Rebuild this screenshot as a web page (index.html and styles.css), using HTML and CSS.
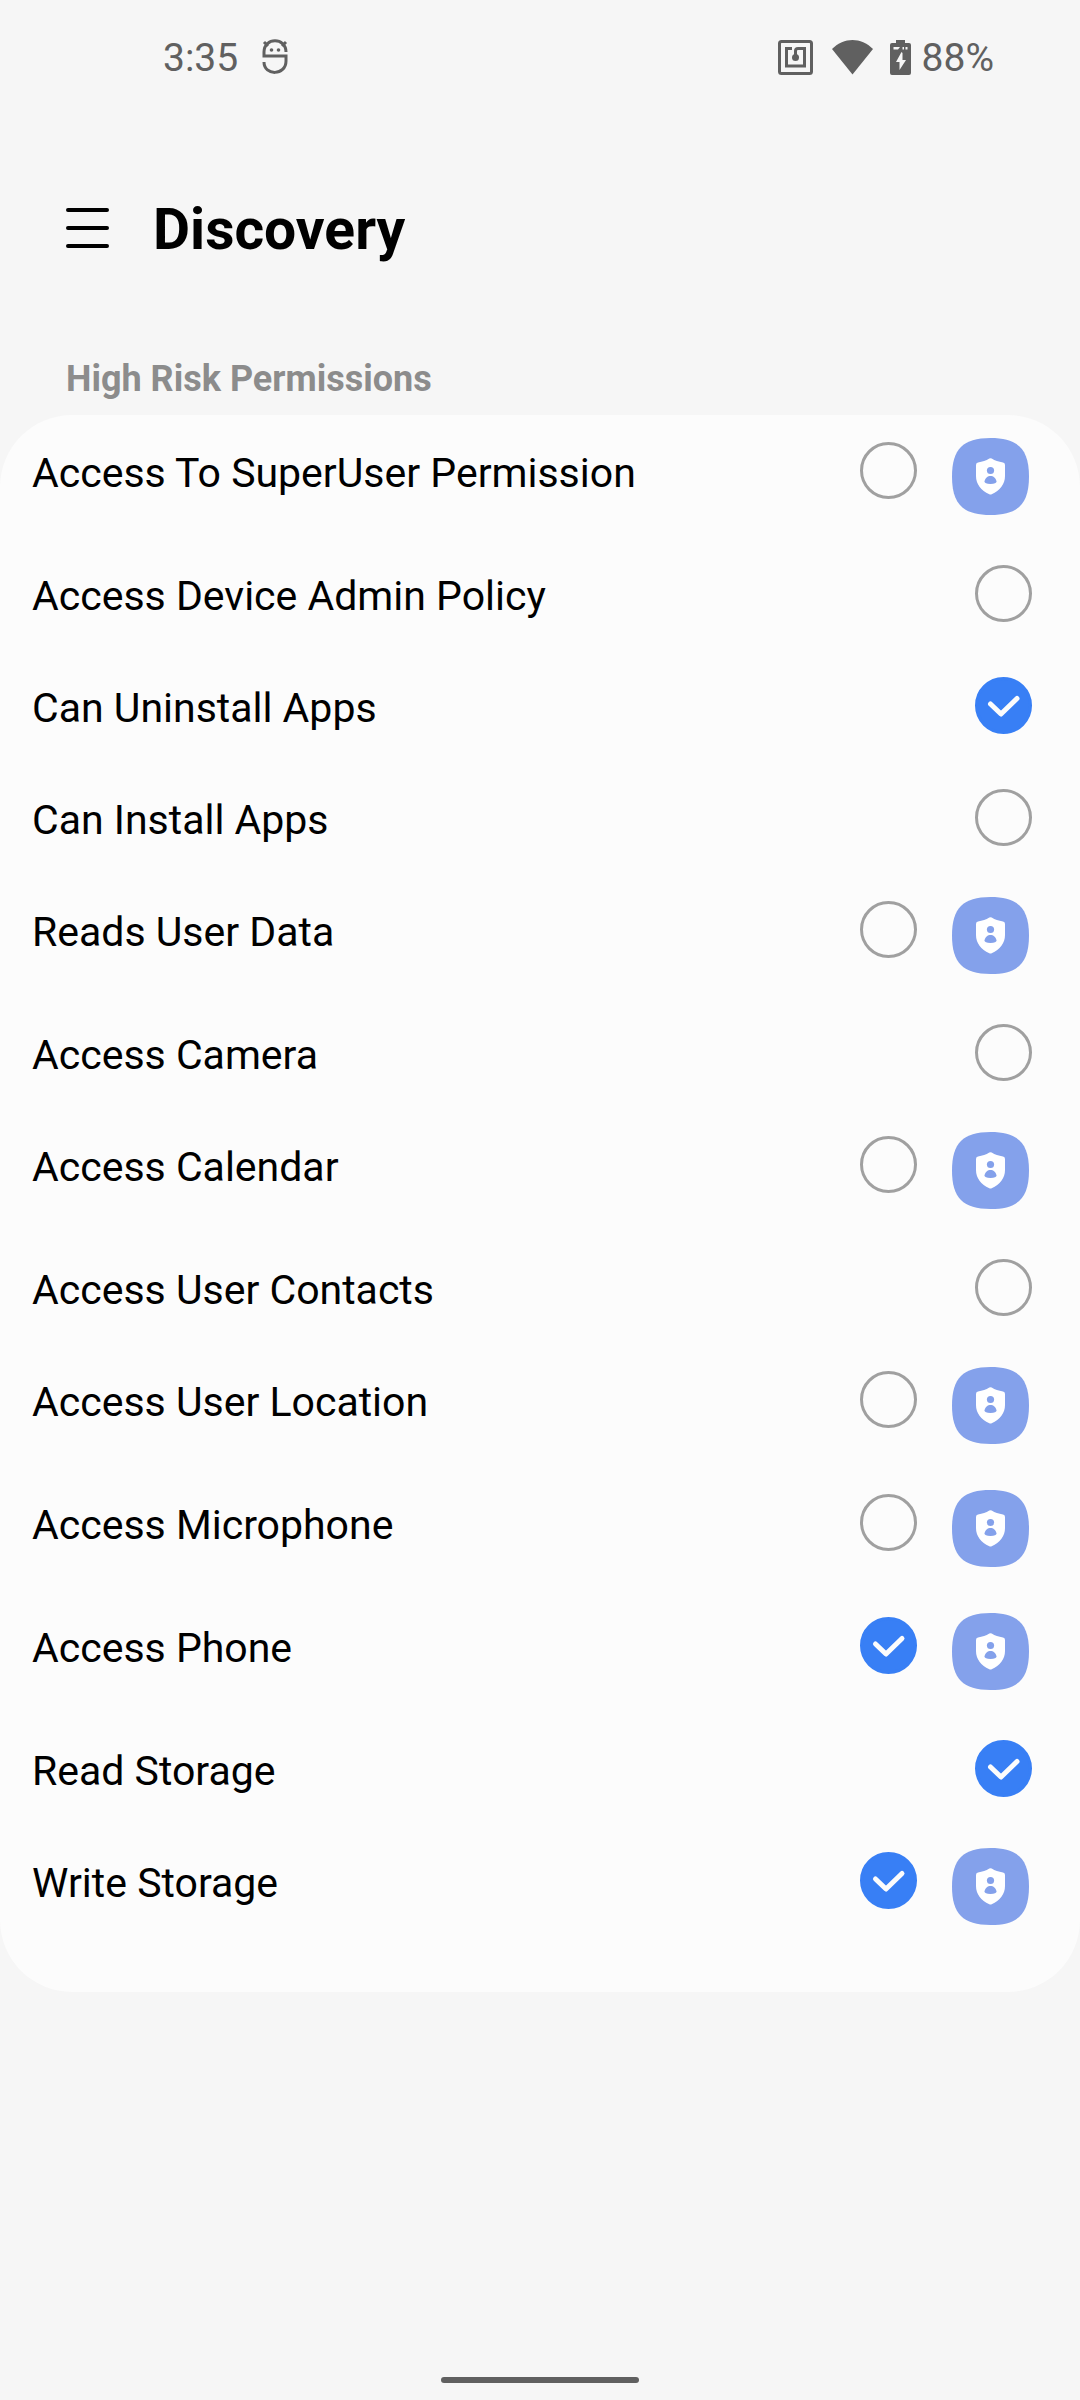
FILE: index.html
```html
<!DOCTYPE html>
<html lang="en">

<head>
    <meta charset="UTF-8">
    <meta name="viewport" content="width=device-width, initial-scale=1.0">
    <title>Discovery</title>
    <link rel="stylesheet" href="styles.css">
</head>

<body>
    <!-- Shared icons -->
    <svg class="sprite" width="0" height="0" aria-hidden="true">
        <symbol id="tick" viewBox="0 0 57 57">
            <path d="M15.500 27 L26 37 L42 21.500" fill="none" stroke="#fcfcfc" stroke-width="5" stroke-linecap="round" stroke-linejoin="round" />
        </symbol>
        <symbol id="shield" viewBox="0 0 77 77">
            <path d="M38.500 0 C66 0 77 11 77 38.500 C77 66 66 77 38.500 77 C11 77 0 66 0 38.500 C0 11 11 0 38.500 0 Z" fill="#84a1eb" />
            <path d="M37.300 20.600 Q38.500 19.800 39.700 20.600 C43 22.700 46.500 23.900 51 24.400 Q53 24.800 53 27 V38 C53 46 48 52.500 39.700 56.300 Q38.500 56.900 37.300 56.300 C29 52.500 24 46 24 38 V27 Q24 24.800 26 24.400 C30.500 23.900 34 22.700 37.300 20.600 Z" fill="#fff" />
            <circle cx="38.500" cy="32.500" r="3.600" fill="#84a1eb" />
            <path d="M32.500 43.500 C33.500 36 43.500 36 44.500 43.500 Q44.500 45.500 38.500 46 Q32.500 45.500 32.500 43.500 Z" fill="#84a1eb" />
        </symbol>
    </svg>

    <div class="status-bar">
        <span class="clock">3:35</span>
        <svg class="bug-icon" viewBox="0 0 26 36" width="26" height="36" fill="none" stroke="#606060" stroke-width="3">
            <path d="M24 13 C24 -2 2 -2 2 13 V17 H24 V22 C24 37 2 37 2 23" />
            <path d="M2 3 L6 7 M24 3 L20 7" />
            <circle cx="9.500" cy="11" r="1.800" fill="#606060" stroke="none" />
            <circle cx="16.500" cy="11" r="1.800" fill="#606060" stroke="none" />
        </svg>
        <div class="status-right">
            <svg viewBox="0 0 35 35" width="35" height="35" fill="none" stroke="#606060" stroke-width="3">
                <rect x="1.500" y="1.500" width="32" height="32" rx="2" />
                <path d="M14 8.500 H8.500 V26 H26.500 V8.500 H20 Q17.500 8.500 17.500 11 V17" />
                <circle cx="17.500" cy="17.500" r="3.500" fill="#606060" stroke="none" />
            </svg>
            <svg class="wifi-icon" viewBox="0 0 41 35" width="41" height="35">
                <path d="M0 9 C12 -3 29 -3 41 9 L20.500 34.500 Z" fill="#606060" />
            </svg>
            <svg class="battery-icon" viewBox="0 0 21 35" width="21" height="35">
                <path d="M6 0 H15 V3 H19 Q21 3 21 5 V33 Q21 35 19 35 H2 Q0 35 0 33 V5 Q0 3 2 3 H6 Z" fill="#606060" />
                <path d="M12.500 13 V20 H16 L9.500 30 V22 H6 L11.500 12 Z M3.500 7 H10 L8 9.500 H3.500 Z M12.500 7 H14 V9.500 H12.500 Z M15.500 7 H17.500 V9.500 H15.500 Z" fill="#f6f6f6" />
            </svg>
            <span>88%</span>
        </div>
    </div>

    <header class="app-header">
        <button class="menu-button" type="button" aria-label="Menu">
            <svg viewBox="0 0 43 40" width="43" height="40" stroke="#000" stroke-width="4" stroke-linecap="round">
                <path d="M2 2 H41 M2 20 H41 M2 38 H41" />
            </svg>
        </button>
        <h1>Discovery</h1>
    </header>

    <main>
        <h2>High Risk Permissions</h2>
        <ul class="permissions">
            <li class="row">
                <label for="superuser">Access To SuperUser Permission</label>
                <span class="check"><input type="checkbox" id="superuser"><svg><use href="#tick" /></svg></span>
                <button class="shield" type="button" aria-label="Permission settings"><svg><use href="#shield" /></svg></button>
            </li>
            <li class="row">
                <label for="admin">Access Device Admin Policy</label>
                <span class="check"><input type="checkbox" id="admin"><svg><use href="#tick" /></svg></span>
            </li>
            <li class="row">
                <label for="uninstall">Can Uninstall Apps</label>
                <span class="check"><input type="checkbox" id="uninstall" checked><svg><use href="#tick" /></svg></span>
            </li>
            <li class="row">
                <label for="install">Can Install Apps</label>
                <span class="check"><input type="checkbox" id="install"><svg><use href="#tick" /></svg></span>
            </li>
            <li class="row">
                <label for="user-data">Reads User Data</label>
                <span class="check"><input type="checkbox" id="user-data"><svg><use href="#tick" /></svg></span>
                <button class="shield" type="button" aria-label="Permission settings"><svg><use href="#shield" /></svg></button>
            </li>
            <li class="row">
                <label for="camera">Access Camera</label>
                <span class="check"><input type="checkbox" id="camera"><svg><use href="#tick" /></svg></span>
            </li>
            <li class="row">
                <label for="calendar">Access Calendar</label>
                <span class="check"><input type="checkbox" id="calendar"><svg><use href="#tick" /></svg></span>
                <button class="shield" type="button" aria-label="Permission settings"><svg><use href="#shield" /></svg></button>
            </li>
            <li class="row">
                <label for="contacts">Access User Contacts</label>
                <span class="check"><input type="checkbox" id="contacts"><svg><use href="#tick" /></svg></span>
            </li>
            <li class="row">
                <label for="location">Access User Location</label>
                <span class="check"><input type="checkbox" id="location"><svg><use href="#tick" /></svg></span>
                <button class="shield" type="button" aria-label="Permission settings"><svg><use href="#shield" /></svg></button>
            </li>
            <li class="row">
                <label for="microphone">Access Microphone</label>
                <span class="check"><input type="checkbox" id="microphone"><svg><use href="#tick" /></svg></span>
                <button class="shield" type="button" aria-label="Permission settings"><svg><use href="#shield" /></svg></button>
            </li>
            <li class="row">
                <label for="phone">Access Phone</label>
                <span class="check"><input type="checkbox" id="phone" checked><svg><use href="#tick" /></svg></span>
                <button class="shield" type="button" aria-label="Permission settings"><svg><use href="#shield" /></svg></button>
            </li>
            <li class="row">
                <label for="read-storage">Read Storage</label>
                <span class="check"><input type="checkbox" id="read-storage" checked><svg><use href="#tick" /></svg></span>
            </li>
            <li class="row">
                <label for="write-storage">Write Storage</label>
                <span class="check"><input type="checkbox" id="write-storage" checked><svg><use href="#tick" /></svg></span>
                <button class="shield" type="button" aria-label="Permission settings"><svg><use href="#shield" /></svg></button>
            </li>
        </ul>
    </main>

    <div class="home-bar"></div>
</body>

</html>
```
FILE: styles.css
```css
* {
    box-sizing: border-box;
}

body {
    font-family: Roboto, sans-serif;
    background-color: #f6f6f6;
    color: #000;
    margin: 0;
    min-height: 100vh;
    display: flex;
    flex-direction: column;
}

svg {
    display: block;
}

button {
    padding: 0;
    border: none;
    background: none;
    cursor: pointer;
}

.sprite {
    position: absolute;
}

.status-bar {
    display: flex;
    align-items: center;
    height: 114px;
    padding: 0 86px 0 163px;
    font-size: 39px;
    color: #606060;
}

.status-bar span {
    padding-top: 2px;
}

.bug-icon {
    margin-left: 24px;
}

.status-right {
    display: flex;
    align-items: center;
    margin-left: auto;
}

.wifi-icon {
    margin: 0 17px 0 19px;
}

.battery-icon {
    margin-right: 11px;
}

.app-header {
    display: flex;
    align-items: center;
    gap: 44px;
    height: 228px;
    padding: 0 66px;
}

h1 {
    margin: 0;
    padding-top: 3px;
    font-size: 57px;
    font-weight: bold;
}

h2 {
    margin: 0;
    padding: 15px 66px 14px;
    font-size: 36px;
    line-height: 44px;
    font-weight: bold;
    color: #8c8c8c;
}

.permissions {
    list-style: none;
    margin: 0;
    padding: 0 48px 44px 32px;
    background-color: #fcfcfc;
    border-radius: 72px;
}

.row {
    display: flex;
    align-items: flex-start;
}

.row label {
    flex: 1;
    padding-top: 4px;
    font-size: 41px;
    line-height: 108px;
}

.check {
    display: grid;
    margin-top: 27px;
}

.check input,
.check svg {
    grid-area: 1 / 1;
    width: 57px;
    height: 57px;
}

.check input {
    appearance: none;
    margin: 0;
    border: 3px solid #a0a0a0;
    border-radius: 50%;
}

.check svg {
    visibility: hidden;
    pointer-events: none;
}

.check input:checked {
    border-color: #387ff5;
    background-color: #387ff5;
}

.check input:checked + svg {
    visibility: visible;
}

.shield {
    margin: 23px 3px 23px 35px;
}

.shield svg {
    width: 77px;
    height: 77px;
}

.home-bar {
    width: 198px;
    height: 6px;
    margin: auto auto 17px;
    border-radius: 3px;
    background-color: #606060;
}
```
